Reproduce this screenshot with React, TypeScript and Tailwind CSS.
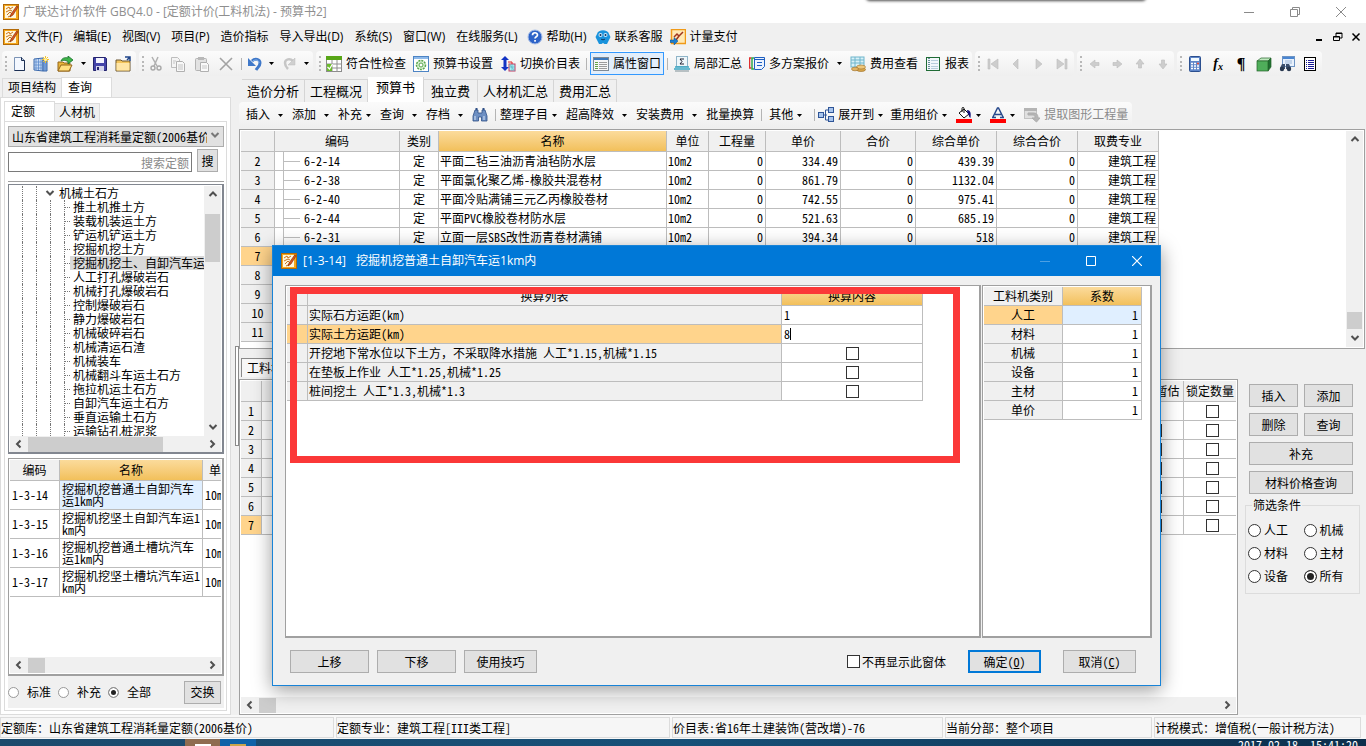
import React, { useState, type ReactNode } from "react";

const UI = "font-['Open_Sans','Noto_Sans_CJK_SC',sans-serif]";
const SONG = "font-['Noto_Sans_Mono_CJK_SC','Noto_Sans_CJK_SC',monospace]";

type IconProps = { children: ReactNode; w?: number; h?: number };

const Svg = ({ children, w = 16, h = 16 }: IconProps) => (
  <svg width={w} height={h} viewBox={`0 0 ${w} ${h}`} className="shrink-0" aria-hidden="true">
    {children}
  </svg>
);

const LogoIcon = () => (
  <Svg>
    <rect x="0.5" y="0.5" width="15" height="15" fill="#f5a81c" stroke="#b36a08" />
    <rect x="2" y="2" width="11" height="12" fill="#fff6dc" />
    <path d="M3 5l3-2 1 2 3-2M3 8l4-2 2 1M4 11l3-3 3 3M5 13l4-2" stroke="#c9731a" fill="none" />
    <path d="M14 1.5L8 10l-1 3 3-2 5-8z" fill="#d9541e" stroke="#7d2d08" strokeWidth="0.6" />
  </Svg>
);

const NewIcon = () => (
  <Svg>
    <path d="M3.5 1.5h7l3 3v10h-10z" fill="#f4f8ff" stroke="#7b93b5" />
    <path d="M10.5 1.5l3 3v10h-10" fill="none" stroke="#1c2f52" />
    <path d="M10.5 1.5v3h3" fill="#c5d4ea" stroke="#1c2f52" />
  </Svg>
);

const BuildingIcon = () => (
  <Svg>
    <path d="M1 3l9-1v13l-9-1z" fill="#c9dcf5" stroke="#3a68ab" />
    <path d="M10 4h4v11h-4z" fill="#7ea6dc" stroke="#3a68ab" />
    <path d="M3 3v11M5.5 3v11M8 2.500v12M1 6h9M1 9h9M1 12h9M12 5v9" stroke="#5c8ccd" strokeWidth="0.8" />
    <path d="M12.500 0v7M9 3.500h7M10 1l5 5M15 1l-5 5" stroke="#f7c325" />
    <circle cx="12.500" cy="3.500" r="1.500" fill="#fff2a0" />
  </Svg>
);

const OpenIcon = () => (
  <Svg>
    <path d="M1 6h5l1 1h6v8H1z" fill="#e8b53a" stroke="#94661a" />
    <path d="M1 15l3-6h11l-3 6z" fill="#ffdf7e" stroke="#94661a" />
    <path d="M4 5c1-3 4-4 7-3V0l5 4-5 4V5.500C8 4 6 4 4 5z" fill="#3fb54a" stroke="#14702a" strokeWidth="0.8" />
  </Svg>
);

const SaveIcon = () => (
  <Svg>
    <path d="M1.500 1.500h12l1 1v12h-13z" fill="#4343a8" stroke="#24246e" />
    <rect x="4" y="2" width="8" height="5" fill="#f4f4ff" />
    <rect x="4" y="10" width="8" height="5" fill="#d5d5ea" />
    <rect x="5" y="11" width="2" height="3" fill="#24246e" />
  </Svg>
);

const FolderIcon = () => (
  <Svg>
    <path d="M1 4h5l1 1h8v10H1z" fill="#f3c45b" stroke="#6b5632" />
    <path d="M1.500 7h13v7.500h-13z" fill="#ffe6a6" />
    <path d="M10 1h5v4M15 1l-3 3" stroke="#22478b" strokeWidth="1.500" fill="none" />
  </Svg>
);

const CutIcon = () => (
  <Svg>
    <path d="M4 1l5 9M10 1L6 10" stroke="#b0b0b0" strokeWidth="1.500" />
    <circle cx="5" cy="12" r="2" fill="none" stroke="#a8a8a8" strokeWidth="1.400" />
    <circle cx="11" cy="12" r="2" fill="none" stroke="#a8a8a8" strokeWidth="1.400" />
  </Svg>
);

const CopyIcon = () => (
  <Svg>
    <path d="M1.500 1.500h6l2 2v8h-8z" fill="#f4f4f4" stroke="#bdbdbd" />
    <path d="M6.500 5.500h6l2 2v8h-8z" fill="#f8f8f8" stroke="#b0b0b0" />
    <path d="M8 9h5M8 11h5M8 13h5M3 5h3M3 7h2" stroke="#c4c4c4" />
  </Svg>
);

const PasteIcon = () => (
  <Svg>
    <rect x="1.500" y="2.500" width="11" height="12" rx="1" fill="#e2e2e2" stroke="#b4b4b4" />
    <rect x="4" y="1" width="6" height="3" fill="#b8b8b8" />
    <path d="M6.500 6.500h6l2 2v7h-8z" fill="#fafafa" stroke="#b0b0b0" />
    <path d="M8 10h5M8 12h5" stroke="#c8c8c8" />
  </Svg>
);

const DeleteIcon = () => (
  <Svg>
    <path d="M2 2l12 12M14 2L2 14" stroke="#a2a2a2" strokeWidth="1.600" />
  </Svg>
);

const UndoIcon = () => (
  <Svg>
    <path d="M5 5c3-3 8-2 8 2 0 3-2 4-4 7" stroke="#3f78c9" strokeWidth="3" fill="none" />
    <path d="M1 2v8h8z" fill="#3f78c9" />
    <path d="M6 5c3-2 6-1 6 2" stroke="#8fb8ee" fill="none" />
  </Svg>
);

const RedoIcon = () => (
  <Svg>
    <path d="M12 5C9 2 4 3 4 7c0 3 1 4 3 6" stroke="#c6c6c6" strokeWidth="2.500" fill="none" />
    <path d="M14 2v7H7z" fill="#d0d0d0" stroke="#bcbcbc" strokeWidth="0.500" />
  </Svg>
);

const CheckTableIcon = () => (
  <Svg>
    <rect x="0.500" y="0.500" width="15" height="15" fill="#fff" stroke="#8c8c8c" />
    <rect x="0" y="0" width="16" height="4" fill="#58a618" />
    <path d="M0 8h16M0 12h16M6 4v12M11 4v12" stroke="#8f8f8f" />
    <rect x="1" y="8" width="5" height="7" fill="#6cbd2c" />
    <path d="M1.500 11l2 2 3-5" stroke="#fff" fill="none" strokeWidth="1.200" />
  </Svg>
);

const GearIcon = () => (
  <Svg>
    <rect x="0.500" y="0.500" width="15" height="15" fill="#fff" stroke="#4d84c4" />
    <rect x="1" y="1" width="14" height="2" fill="#8db9ea" />
    <circle cx="8" cy="9" r="4.500" fill="#d9f0d2" stroke="#58a64d" strokeDasharray="2 1" strokeWidth="1.500" />
    <circle cx="8" cy="9" r="2" fill="#fff" stroke="#58a64d" />
  </Svg>
);

const SwitchIcon = () => (
  <Svg>
    <path d="M5 0l4 4H6.500v7H9l-4 4-4-4h2.500V4H1z" fill="#1233c4" />
    <rect x="9" y="8" width="6" height="7" fill="#a8eef2" stroke="#c23a62" />
    <path d="M9 11h6M12 8v7M9 8l6 7" stroke="#5ab6c8" strokeWidth="0.700" />
    <path d="M8 6h4v2" stroke="#e02424" fill="none" />
  </Svg>
);

const PropsIcon = () => (
  <Svg>
    <rect x="0.500" y="1.500" width="15" height="13" fill="#f7f7f7" stroke="#7e8a96" />
    <rect x="1" y="2" width="14" height="2" fill="#3b78bd" />
    <path d="M2 6.500h3M2 8.500h3M2 10.500h3M2 12.500h3" stroke="#64a443" />
    <path d="M6 6.500h8M6 8.500h8M6 10.500h8M6 12.500h8" stroke="#9c9c9c" />
  </Svg>
);

const SumIcon = () => (
  <Svg>
    <rect x="2.500" y="0.500" width="11" height="10" fill="#eef7fb" stroke="#8fb4c8" />
    <path d="M10 3H6l2 2.500L6 8h4" stroke="#223" fill="none" />
    <path d="M0 13h16M1 11h14" stroke="#3aa6c4" strokeWidth="1.500" />
    <path d="M1 15h14" stroke="#7f8f96" />
  </Svg>
);

const PlansIcon = () => (
  <Svg>
    <path d="M2.500 2h-2v10h2" stroke="#e03030" fill="none" strokeWidth="1.500" />
    <path d="M5 2H3v11h2" stroke="#2fa84b" fill="none" strokeWidth="1.500" />
    <path d="M5.500 1.500h10v9l-3 3h-7z" fill="#eaf2ff" stroke="#1e5fc0" />
    <path d="M5.500 3.500h10M8 6.500h5M8 9.500h5" stroke="#1e5fc0" />
  </Svg>
);

const CoinsIcon = () => (
  <Svg>
    <rect x="1" y="1" width="13" height="10" fill="#d8f1f8" stroke="#6fb5cc" />
    <path d="M1 4h13M1 7h13M5 1v10M10 1v10" stroke="#6fb5cc" />
    <ellipse cx="11" cy="13.500" rx="4.500" ry="2" fill="#d8a64c" stroke="#9a6c24" strokeWidth="0.600" />
    <ellipse cx="11" cy="11" rx="4.500" ry="2" fill="#edc77c" stroke="#9a6c24" strokeWidth="0.600" />
    <ellipse cx="5" cy="13" rx="3.500" ry="1.800" fill="#e2b465" stroke="#9a6c24" strokeWidth="0.600" />
  </Svg>
);

const ReportIcon = () => (
  <Svg>
    <rect x="1.500" y="1.500" width="13" height="13" fill="#f2f7fb" stroke="#1f6b35" />
    <path d="M4 2v12" stroke="#6a8f9c" strokeWidth="2" strokeDasharray="1 1" />
    <path d="M6 4.500h7M6 7.500h7M6 10.500h7M6 12.500h7" stroke="#b7cddb" />
  </Svg>
);

const NavIcon = ({ d }: { d: string }) => (
  <Svg w={12} h={12}>
    <path d={d} fill="#cdcdcd" stroke="#bcbcbc" strokeWidth="0.600" />
  </Svg>
);

const CalcIcon = () => (
  <Svg>
    <rect x="2.500" y="0.500" width="11" height="15" rx="1" fill="#5f86c8" stroke="#2b4f8f" />
    <rect x="4" y="2" width="8" height="3" fill="#f2fbff" />
    <path d="M4 7.500h8M4 10h8M4 12.500h8" stroke="#fff" strokeWidth="1.500" strokeDasharray="2 1" />
    <path d="M10 7.500h2" stroke="#e84c3c" strokeWidth="1.500" />
  </Svg>
);

const CubeIcon = () => (
  <Svg>
    <path d="M1 5l4-3h10l-3 3z" fill="#bfe8bf" stroke="#24632a" strokeWidth="0.700" />
    <path d="M12 5l3-3v9l-3 4z" fill="#1f7030" stroke="#24632a" strokeWidth="0.700" />
    <rect x="1" y="5" width="11" height="10" fill="#4fae5a" stroke="#24632a" strokeWidth="0.700" />
  </Svg>
);

const FindWinIcon = () => (
  <Svg>
    <rect x="3.500" y="0.500" width="12" height="10" fill="#e8f1fc" stroke="#6d94c4" />
    <rect x="4" y="1" width="11" height="2" fill="#4a86d2" />
    <path d="M6 5h7M6 7h7" stroke="#9db7d8" />
    <path d="M1 12l2-4h3v5H1zM7 13V8h3l2 4v1z" fill="#3b4f6d" />
    <circle cx="3" cy="13" r="2.200" fill="#28384f" />
    <circle cx="10" cy="13" r="2.200" fill="#28384f" />
  </Svg>
);

const ListIcon = () => (
  <Svg>
    <rect x="2.500" y="1.500" width="11" height="13" fill="#fff" stroke="#000" />
    <path d="M4 4.500h1M4 6.500h1M4 8.500h1M4 10.500h1M4 12.500h1M6 4.500h6M6 6.500h6M6 8.500h6M6 10.500h6M6 12.500h6" stroke="#1a1a96" />
  </Svg>
);

const HelpIcon = () => (
  <Svg>
    <circle cx="8" cy="8" r="7" fill="#2d63c8" stroke="#a9bfe8" />
    <path d="M5.500 6.200C5.500 3 10.500 3 10.500 6c0 1.800-2.500 1.800-2.500 3.600" stroke="#fff" strokeWidth="1.700" fill="none" />
    <rect x="7.200" y="11" width="1.700" height="1.700" fill="#fff" />
  </Svg>
);

const ServiceIcon = () => (
  <Svg>
    <path d="M2 5C3 0 13 0 14 5l1.500 3-1.500 3-2 4H9.500L8 14l-1.500 1H4l-2-4L.5 8z" fill="#1a93dc" />
    <circle cx="5.500" cy="6" r="2" fill="#cdeaff" />
    <circle cx="10.500" cy="6" r="2" fill="#cdeaff" />
    <circle cx="5.500" cy="6" r="1" fill="#10345c" />
    <circle cx="10.500" cy="6" r="1" fill="#10345c" />
    <path d="M6 10c1 1 3 1 4 0" stroke="#10345c" fill="none" />
  </Svg>
);

const PayIcon = () => (
  <Svg>
    <rect x="1.500" y="0.500" width="14" height="14" fill="#ffe9b5" stroke="#f09a18" strokeWidth="1.500" />
    <path d="M4 8l3-3 2 2-3 4M8 8l5-5" stroke="#a03520" strokeWidth="1.500" fill="none" />
    <path d="M0 11h4V8.500L8 12l-4 4v-2.500H0z" fill="#1b7fd0" stroke="#0b4b88" strokeWidth="0.500" />
  </Svg>
);

const BinocIcon = () => (
  <Svg>
    <path d="M1 9l2-6h3v3h4V3h3l2 6v5H9.500v-4h-3v4H1z" fill="#6d8fc2" stroke="#2f4f86" strokeWidth="0.800" />
    <path d="M3.500 1h2v2h-2zM10.500 1h2v2h-2z" fill="#2f4f86" />
    <path d="M3 9v4M12 9v4" stroke="#d8e5f8" />
  </Svg>
);

const ExpandIcon = () => (
  <Svg>
    <path d="M5 8h4M7.500 8V3h3M7.500 8v5h3" stroke="#2f5597" fill="none" />
    <rect x="0.500" y="5.500" width="5" height="5" fill="#a8c4ec" stroke="#2f5597" />
    <rect x="10.500" y="0.500" width="5" height="5" fill="#a8c4ec" stroke="#2f5597" />
    <rect x="10.500" y="9.500" width="5" height="5" fill="#a8c4ec" stroke="#2f5597" />
  </Svg>
);

const FillIcon = () => (
  <Svg>
    <path d="M3 6l5-4 5 5-5 4z" fill="#fff" stroke="#111" />
    <path d="M6 5V1.500c0-1.500 2-1.500 2 0V6" stroke="#111" fill="none" />
    <path d="M11 3c4 0 4 4 3.500 8-2-1-1.500-4-3-5z" fill="#12127a" />
    <rect x="0" y="12" width="16" height="4" fill="#f00" />
  </Svg>
);

const FontColorIcon = () => (
  <Svg>
    <path d="M3 10L7.500 1h1L13 10M5 7.500h6M2 10.500h4M10 10.500h4" stroke="#28498c" strokeWidth="1.500" fill="none" />
    <rect x="0" y="12" width="16" height="4" fill="#f00" />
  </Svg>
);

const ExtractIcon = () => (
  <Svg>
    <rect x="0.500" y="1.500" width="12" height="10" fill="#e0e0e0" stroke="#c2c2c2" />
    <rect x="0" y="1" width="13" height="3" fill="#b4b4b4" />
    <path d="M4 8h5c2 0 2 1 2 3H8l4.500 4 3.500-4h-2c0-4-2-5-5-5H4z" fill="#b5b5b5" stroke="#adadad" />
  </Svg>
);

const Chevron = ({ dir, color = "#505050" }: { dir: "up" | "down" | "left" | "right"; color?: string }) => {
  const paths = {
    up: "M1.500 6L5 2.500 8.500 6",
    down: "M1.500 3L5 6.500 8.500 3",
    left: "M6.500 1.500L3 5l3.500 3.500",
    right: "M3.500 1.500L7 5 3.500 8.500",
  };
  return (
    <Svg w={10} h={10}>
      <path d={paths[dir]} stroke={color} strokeWidth="2" fill="none" />
    </Svg>
  );
};

const Caret = ({ color = "#000" }: { color?: string }) => (
  <Svg w={5} h={3}>
    <path d="M0 0h5L2.500 3z" fill={color} />
  </Svg>
);

const Drop = ({ label }: { label: string }) => (
  <button type="button" aria-label={label} className="flex h-5 w-[13px] shrink-0 items-center justify-center">
    <Caret />
  </button>
);

const Sep = () => <span className="mx-[3px] h-3 w-px shrink-0 bg-[#b4b4b4]" />;

const Grip = () => <span className="mx-[2px] h-[15px] w-0 shrink-0 border-l-2 border-dotted border-[#b8b8b8]" />;

const Segment = ({ children }: { children: ReactNode }) => (
  <div className="flex h-[25px] shrink-0 items-center rounded-sm bg-linear-to-b from-[#fbfbfb] to-[#efefef] pl-px">
    {children}
  </div>
);

const IconButton = ({ label, children, className = "w-6" }: { label: string; children: ReactNode; className?: string }) => (
  <button type="button" aria-label={label} className={`flex h-5 shrink-0 items-center justify-center ${className}`}>
    {children}
  </button>
);

const ToolButton = ({ icon, label, active = false }: { icon: ReactNode; label: string; active?: boolean }) => (
  <button
    type="button"
    className={`flex h-[23px] shrink-0 items-center gap-1 border px-[2px] whitespace-nowrap ${
      active ? "border-[#3399ff] bg-[#e2eefb]" : "border-transparent"
    }`}
  >
    {icon}
    {label}
  </button>
);

const MenuDrop = ({ label, tight = false }: { label: string; tight?: boolean }) => (
  <button type="button" className={`flex h-5 shrink-0 items-center pr-[9px] whitespace-nowrap ${tight ? "gap-1" : "gap-2"}`}>
    {label}
    <Caret />
  </button>
);

const Button = ({ children, className = "" }: { children: ReactNode; className?: string }) => (
  <button type="button" className={`h-[23px] shrink-0 border border-[#adadad] bg-[#e1e1e1] leading-none whitespace-nowrap ${className}`}>
    {children}
  </button>
);

const HScroll = ({ thumb }: { thumb: string }) => (
  <div className="flex h-4 shrink-0 items-center bg-[#f0f0f0]">
    <span className="flex w-[18px] justify-center">
      <Chevron dir="left" />
    </span>
    <span className={`h-[15px] bg-[#cdcdcd] ${thumb}`} />
    <span className="ml-auto flex w-[18px] justify-center">
      <Chevron dir="right" />
    </span>
  </div>
);

const Radio = ({ name, label, dark = false, checked = false, gap }: { name: string; label: string; dark?: boolean; checked?: boolean; gap: string }) => (
  <label className={`flex items-center ${gap}`}>
    <input
      type="radio"
      name={name}
      defaultChecked={checked}
      className={`appearance-none rounded-full border bg-white checked:bg-[#222] checked:shadow-[inset_0_0_0_2px_white] ${
        dark ? "size-[13px] border-[#333]" : "size-[11px] border-[#999]"
      }`}
    />
    {label}
  </label>
);

const Check = ({ label }: { label: string }) => (
  <input type="checkbox" aria-label={label} className="block size-[13px] appearance-none border border-[#333] bg-white checked:bg-[#333]" />
);

const menus = ["文件(F)", "编辑(E)", "视图(V)", "项目(P)", "造价指标", "导入导出(D)", "系统(S)", "窗口(W)", "在线服务(L)"];

const treeItems = [
  "推土机推土方",
  "装载机装运土方",
  "铲运机铲运土方",
  "挖掘机挖土方",
  "挖掘机挖土、自卸汽车运",
  "人工打孔爆破岩石",
  "机械打孔爆破岩石",
  "控制爆破岩石",
  "静力爆破岩石",
  "机械破碎岩石",
  "机械清运石渣",
  "机械装车",
  "机械翻斗车运土石方",
  "拖拉机运土石方",
  "自卸汽车运土石方",
  "垂直运输土石方",
  "运输钻孔桩泥浆",
];

const quotas = [
  ["1-3-14", "挖掘机挖普通土自卸汽车运1km内"],
  ["1-3-15", "挖掘机挖坚土自卸汽车运1km内"],
  ["1-3-16", "挖掘机挖普通土槽坑汽车运1km内"],
  ["1-3-17", "挖掘机挖坚土槽坑汽车运1km内"],
];

const budgetRows = [
  { no: 2, code: "6-2-14", name: "平面二毡三油沥青油毡防水层", price: "334.49", total: "439.39" },
  { no: 3, code: "6-2-38", name: "平面氯化聚乙烯-橡胶共混卷材", price: "861.79", total: "1132.04" },
  { no: 4, code: "6-2-40", name: "平面冷贴满铺三元乙丙橡胶卷材", price: "742.55", total: "975.41" },
  { no: 5, code: "6-2-44", name: "平面PVC橡胶卷材防水层", price: "521.63", total: "685.19" },
  { no: 6, code: "6-2-31", name: "立面一层SBS改性沥青卷材满铺", price: "394.34", total: "518" },
];

const budgetCols = [34, 125, 39, 228, 42, 57, 75, 75, 81, 81, 81];
const budgetHeads = ["", "编码", "类别", "名称", "单位", "工程量", "单价", "合价", "综合单价", "综合合价", "取费专业"];

const cell = "h-[19px] border-r border-b border-[#bdbdbd] p-0 leading-[18px] whitespace-nowrap";
const gold = "bg-linear-to-b from-[#fbdb9b] to-[#f2c05a]";

const TitleBar = () => (
  <header className="flex h-[23px] shrink-0 items-center bg-white pl-[3px] text-[#8f8f8f]">
    <LogoIcon />
    <h1 className="ml-1 text-xs whitespace-nowrap">广联达计价软件 GBQ4.0 - [定额计价(工料机法) - 预算书2]</h1>
    <div className="ml-auto flex items-center pr-[2px]">
      <IconButton label="最小化" className="w-[46px]">
        <Svg w={10} h={10}><path d="M0 5.500h10" stroke="#8a8a8a" /></Svg>
      </IconButton>
      <IconButton label="还原" className="w-[46px]">
        <Svg w={10} h={10}><path d="M.5 2.500h7v7h-7zM2.500 2.500v-2h7v7h-2" fill="none" stroke="#8a8a8a" /></Svg>
      </IconButton>
      <IconButton label="关闭" className="w-[46px]">
        <Svg w={10} h={10}><path d="M0 0l10 10M10 0L0 10" stroke="#8a8a8a" /></Svg>
      </IconButton>
    </div>
  </header>
);

const MenuBar = () => (
  <nav className="flex h-7 shrink-0 items-center pl-[3px] whitespace-nowrap">
    <LogoIcon />
    <div className="ml-[6px] flex gap-[11px]">
      {menus.map((m) => (
        <button key={m} type="button">{m}</button>
      ))}
    </div>
    <button type="button" className="ml-[9px] flex items-center gap-1"><HelpIcon />帮助(H)</button>
    <button type="button" className="ml-2 flex items-center gap-1"><ServiceIcon />联系客服</button>
    <button type="button" className="ml-[7px] flex items-center gap-1"><PayIcon />计量支付</button>
    <div className="ml-auto flex pr-px">
      <IconButton label="最小化子窗口" className="w-[18px]">
        <Svg w={10} h={10}><path d="M1 8h6" stroke="#000" strokeWidth="2" /></Svg>
      </IconButton>
      <IconButton label="还原子窗口" className="w-[18px]">
        <Svg w={10} h={10}><path d="M.5 4.500h6v4h-6zM3 4V1h6v5H7M3 1.500h6M.5 5h6" fill="none" stroke="#000" /></Svg>
      </IconButton>
      <IconButton label="关闭子窗口" className="w-[18px]">
        <Svg w={10} h={10}><path d="M1.500 1.500l7 7M8.500 1.500l-7 7" stroke="#000" strokeWidth="1.500" /></Svg>
      </IconButton>
    </div>
  </nav>
);

const MainToolbar = () => (
  <div className="flex h-[26px] shrink-0 items-start gap-[3px] pl-[2px]">
    <Segment>
      <Grip />
      <IconButton label="新建" className="w-5"><NewIcon /></IconButton>
      <IconButton label="新建项目"><BuildingIcon /></IconButton>
      <IconButton label="打开"><OpenIcon /></IconButton>
      <Drop label="最近文件" />
      <IconButton label="保存" className="w-5"><SaveIcon /></IconButton>
      <IconButton label="目录" className="w-[26px]"><FolderIcon /></IconButton>
    </Segment>
    <Segment>
      <Grip />
      <IconButton label="剪切" className="w-5"><CutIcon /></IconButton>
      <IconButton label="复制"><CopyIcon /></IconButton>
      <IconButton label="粘贴"><PasteIcon /></IconButton>
      <IconButton label="删除"><DeleteIcon /></IconButton>
      <Sep />
      <IconButton label="撤销" className="w-5"><UndoIcon /></IconButton>
      <Drop label="撤销列表" />
      <IconButton label="恢复" className="w-[22px]"><RedoIcon /></IconButton>
      <Drop label="恢复列表" />
    </Segment>
    <Segment>
      <Grip />
      <div className="flex items-center gap-px">
        <ToolButton icon={<CheckTableIcon />} label="符合性检查" />
        <ToolButton icon={<GearIcon />} label="预算书设置" />
        <ToolButton icon={<SwitchIcon />} label="切换价目表" />
      </div>
      <Sep />
      <ToolButton icon={<PropsIcon />} label="属性窗口" active />
      <Sep />
      <div className="flex items-center gap-px">
        <ToolButton icon={<SumIcon />} label="局部汇总" />
        <ToolButton icon={<PlansIcon />} label="多方案报价" />
        <Drop label="方案列表" />
        <ToolButton icon={<CoinsIcon />} label="费用查看" />
        <ToolButton icon={<ReportIcon />} label="报表" />
      </div>
    </Segment>
    <Segment>
      <Grip />
      <IconButton label="首条" className="w-[22px]"><NavIcon d="M1 1h2v10H1zM11 1v10L4 6z" /></IconButton>
      <IconButton label="上一条"><NavIcon d="M8 1v10L3 6z" /></IconButton>
      <IconButton label="下一条" className="w-[22px]"><NavIcon d="M3 1v10l6-5z" /></IconButton>
      <IconButton label="末条"><NavIcon d="M9 1h2v10H9zM1 1v10l7-5z" /></IconButton>
    </Segment>
    <Segment>
      <Grip />
      <IconButton label="左移" className="w-[22px]"><NavIcon d="M1 6l5-4v2.500h4v3H6V10z" /></IconButton>
      <IconButton label="右移" className="w-[22px]"><NavIcon d="M11 6L6 2v2.500H2v3h4V10z" /></IconButton>
      <IconButton label="上移"><NavIcon d="M6 1l4 5H7.500v4h-3V6H2z" /></IconButton>
      <IconButton label="下移" className="w-[22px]"><NavIcon d="M6 11l4-5H7.500V2h-3v4H2z" /></IconButton>
    </Segment>
    <Segment>
      <Grip />
      <IconButton label="计算器" className="w-[22px]"><CalcIcon /></IconButton>
      <IconButton label="函数" className="w-6">
        <span className="font-['Liberation_Serif',serif] text-sm leading-none font-bold italic">f<sub className="text-[10px]">x</sub></span>
      </IconButton>
      <IconButton label="段落" className="w-[22px]">
        <span className="font-['Liberation_Serif',serif] text-base leading-none font-bold">¶</span>
      </IconButton>
      <IconButton label="图形"><CubeIcon /></IconButton>
      <IconButton label="查找窗口" className="w-[22px]"><FindWinIcon /></IconButton>
      <IconButton label="清单"><ListIcon /></IconButton>
    </Segment>
  </div>
);

const QueryPanel = () => {
  const [current, setCurrent] = useState("挖掘机挖土、自卸汽车运");

  return (
    <aside className="flex w-[231px] shrink-0 flex-col">
      <div className="flex h-5 items-end pl-[2px]">
        <button type="button" className="h-[19px] border border-r-0 border-b-0 border-[#dcdcdc] px-[5px]">项目结构</button>
        <button type="button" className="h-5 w-[51px] border border-b-0 border-[#dcdcdc] bg-white pl-[6px] text-left">查询</button>
      </div>
      <div className="flex min-h-0 flex-1 flex-col border border-[#dcdcdc] bg-white p-[3px]">
        <div className="flex h-5 shrink-0 items-end">
          <button type="button" className="h-5 w-[51px] border border-b-0 border-[#dcdcdc] pl-[6px] text-left">定额</button>
          <button type="button" className="h-[18px] border border-b-0 border-l-0 border-[#dcdcdc] bg-[#f0f0f0] px-1">人材机</button>
        </div>
        <div className={`flex min-h-0 flex-1 flex-col border border-[#dcdcdc] pt-1 pr-[2px] pb-[2px] pl-[3px] ${SONG}`}>
          <div className="relative shrink-0">
            <select aria-label="定额库" className="block h-[21px] w-full appearance-none border border-[#adadad] bg-[#e1e1e1] pr-4 pl-[3px] text-xs leading-none">
              <option>山东省建筑工程消耗量定额(2006基价)</option>
            </select>
            <span className="pointer-events-none absolute top-1 right-1"><Chevron dir="down" color="#777" /></span>
          </div>
          <div className="mt-[2px] flex shrink-0 items-end gap-[5px] border-b border-[#a0a0a0] pb-[9px]">
            <input aria-label="搜索定额" placeholder="搜索定额" className="h-5 w-[184px] border border-[#7a7a7a] px-[2px] text-right placeholder:text-[#8a8a8a]" />
            <Button className="w-[21px]">搜</Button>
          </div>

          <div className="mt-[2px] flex h-[270px] shrink-0 flex-col border border-r-2 border-b-2 border-[#828790] px-px pt-px">
            <div className="flex min-h-0 flex-1">
              <ul className="min-w-0 flex-1 overflow-hidden">
                <li>
                  <div className="flex h-[14px] items-center pl-3">
                    <span className="h-full w-[14px] border-l border-dotted border-[#777]" />
                    <span className="h-full w-[9px] border-l border-dotted border-[#777]" />
                    <span className="mr-1"><Chevron dir="down" /></span>
                    <span className="leading-[14px]">机械土石方</span>
                  </div>
                  <ul>
                    {treeItems.map((item) => (
                      <li key={item} className="flex h-[14px] items-center pl-3">
                        <span className="h-full w-[14px] shrink-0 border-l border-dotted border-[#777]" />
                        <span className="h-full w-[14px] shrink-0 border-l border-dotted border-[#777]" />
                        <span className="h-full w-[14px] shrink-0 border-l border-dotted border-[#777]" />
                        <span className="flex h-full w-[6px] shrink-0 items-center border-l border-dotted border-[#777]">
                          <span className="w-full border-t border-dotted border-[#777]" />
                        </span>
                        <button
                          type="button"
                          onClick={() => setCurrent(item)}
                          className={`h-[14px] pr-1 pl-[3px] leading-[14px] whitespace-nowrap ${item === current ? "bg-[#d9d9d9]" : ""}`}
                        >
                          {item}
                        </button>
                      </li>
                    ))}
                  </ul>
                </li>
              </ul>
              <div className="flex w-[17px] shrink-0 flex-col items-center bg-[#f0f0f0]">
                <span className="flex h-7 items-start pt-1"><Chevron dir="up" /></span>
                <span className="h-12 w-[15px] bg-[#cdcdcd]" />
                <span className="mt-auto pb-1"><Chevron dir="down" /></span>
              </div>
            </div>
            <HScroll thumb="w-[135px]" />
          </div>

          <div className="mt-1 flex min-h-0 flex-1 flex-col border border-r-2 border-b-2 border-[#a0a0a0] p-px">
            <div className="min-h-0 flex-1 overflow-hidden">
              <table className="w-[230px] table-fixed border-separate border-spacing-0">
                <colgroup>
                  <col className="w-[50px]" />
                  <col className="w-[143px]" />
                  <col />
                </colgroup>
                <thead>
                  <tr>
                    <th className={`${cell} h-[21px] bg-[#f0f0f0] font-normal`}>编码</th>
                    <th className={`${cell} h-[21px] font-normal ${gold}`}>名称</th>
                    <th className={`${cell} h-[21px] bg-[#f0f0f0] font-normal`}>单位</th>
                  </tr>
                </thead>
                <tbody>
                  {quotas.map(([code, name], i) => (
                    <tr key={code}>
                      <td className="h-[29px] border-r border-b border-[#bdbdbd] p-0 pl-[2px] leading-none">{code}</td>
                      <td className={`h-[29px] border-r border-b border-[#bdbdbd] p-0 pl-[2px] leading-3 break-all ${i === 0 ? "bg-[#e0efff]" : ""}`}>{name}</td>
                      <td className="h-[29px] border-b border-[#bdbdbd] p-0 pl-[2px] leading-none">10m3</td>
                    </tr>
                  ))}
                </tbody>
              </table>
            </div>
            <HScroll thumb="w-[17px]" />
          </div>

          <div className="flex h-8 shrink-0 items-center gap-[7px] bg-[#f0f0f0]">
            <Radio name="source" label="标准" gap="gap-2" />
            <Radio name="source" label="补充" gap="gap-2" />
            <Radio name="source" label="全部" gap="gap-2" checked />
            <Button className="mr-[3px] ml-auto w-[37px]">交换</Button>
          </div>
        </div>
      </div>
    </aside>
  );
};

const BudgetTabs = () => (
  <div className="flex h-[25px] shrink-0 items-end pl-[3px] text-[13px]">
    {["造价分析", "工程概况", "预算书", "独立费", "人材机汇总", "费用汇总"].map((t) => (
      <button
        key={t}
        type="button"
        className={`min-w-[54px] border-r border-[#d5d5d5] leading-none whitespace-nowrap ${t === "预算书" ? "h-[25px] bg-white px-2 pb-1" : "h-[23px] border-t px-[5px]"}`}
      >
        {t}
      </button>
    ))}
  </div>
);

const BudgetToolbar = () => (
  <div className="flex h-[26px] shrink-0 items-center self-start rounded-sm bg-linear-to-b from-[#fbfbfb] to-[#efefef] pr-1 pl-[7px]">
    <MenuDrop label="插入" />
    <MenuDrop label="添加" />
    <MenuDrop label="补充" tight />
    <MenuDrop label="查询" />
    <MenuDrop label="存档" />
    <BinocIcon />
    <span className="w-1" />
    <Sep />
    <span className="w-px" />
    <MenuDrop label="整理子目" tight />
    <MenuDrop label="超高降效" />
    <MenuDrop label="安装费用" />
    <button type="button" className="mr-1 whitespace-nowrap">批量换算</button>
    <Sep />
    <span className="w-1" />
    <MenuDrop label="其他" tight />
    <Sep />
    <button type="button" className="mr-[7px] flex items-center gap-1 whitespace-nowrap"><ExpandIcon />展开到<Caret /></button>
    <MenuDrop label="重用组价" tight />
    <FillIcon />
    <Drop label="填充颜色" />
    <span className="w-[5px]" />
    <FontColorIcon />
    <Drop label="字体颜色" />
    <span className="w-[5px]" />
    <button type="button" disabled className="flex items-center gap-1 whitespace-nowrap text-[#8a8a8a]"><ExtractIcon />提取图形工程量</button>
  </div>
);

const BudgetGrid = () => (
  <section className={`flex h-[220px] shrink-0 border border-[#a0a0a0] bg-white p-px ${SONG}`}>
    <div className="min-w-0 flex-1 overflow-hidden">
      <table className="w-[918px] table-fixed border-separate border-spacing-0">
        <colgroup>
          {budgetCols.map((w, i) => (
            <col key={i} style={{ width: w }} />
          ))}
        </colgroup>
        <thead>
          <tr>
            {budgetHeads.map((h) => (
              <th key={h} className={`${cell} h-[21px] font-normal ${h === "名称" ? gold : "bg-[#f0f0f0]"}`}>{h}</th>
            ))}
          </tr>
        </thead>
        <tbody>
          {budgetRows.map((r) => (
            <tr key={r.no}>
              <td className={`${cell} bg-[#f0f0f0] text-center`}>{r.no}</td>
              <td className={cell}>
                <div className="ml-2 flex h-[18px] items-center border-l border-[#bdbdbd]">
                  <span className="mr-1 h-px w-4 bg-[#bdbdbd]" />
                  {r.code}
                </div>
              </td>
              <td className={`${cell} text-center`}>定</td>
              <td className={`${cell} pl-px`}>{r.name}</td>
              <td className={`${cell} pl-px`}>10m2</td>
              <td className={`${cell} pr-[2px] text-right`}>0</td>
              <td className={`${cell} pr-[2px] text-right`}>{r.price}</td>
              <td className={`${cell} pr-[2px] text-right`}>0</td>
              <td className={`${cell} pr-[2px] text-right`}>{r.total}</td>
              <td className={`${cell} pr-[2px] text-right`}>0</td>
              <td className={`${cell} pr-[2px] text-right`}>建筑工程</td>
            </tr>
          ))}
          {[7, 8, 9, 10, 11].map((n) => (
            <tr key={n}>
              <td className={`${cell} text-center ${n === 7 ? "bg-[#ffd48c]" : "bg-[#f0f0f0]"}`}>{n}</td>
              {budgetCols.slice(1).map((_, i) => (
                <td key={i} className={cell} />
              ))}
            </tr>
          ))}
        </tbody>
      </table>
    </div>
    <div className="flex w-[17px] shrink-0 flex-col items-center bg-[#f0f0f0]">
      <span className="pt-1"><Chevron dir="up" /></span>
      <span className="mt-auto h-[17px] w-[15px] bg-[#cdcdcd]" />
      <span className="pt-1 pb-1"><Chevron dir="down" /></span>
    </div>
  </section>
);

const MaterialGrid = () => (
  <section className={`flex min-w-0 flex-1 flex-col border border-[#a0a0a0] bg-white p-px ${SONG}`}>
    <div className="min-h-0 flex-1 overflow-hidden">
      <table className="w-full table-fixed border-separate border-spacing-0">
        <colgroup>
          <col className="w-[21px]" />
          <col />
          <col className="w-[56px]" />
          <col className="w-[52px]" />
        </colgroup>
        <thead>
          <tr>
            {["", "名称", "是否暂估", "锁定数量"].map((h) => (
              <th key={h} className={`${cell} h-[21px] bg-[#f0f0f0] font-normal last:border-r-0`}>{h}</th>
            ))}
          </tr>
        </thead>
        <tbody>
          {[1, 2, 3, 4, 5, 6, 7].map((n) => (
            <tr key={n}>
              <td className={`${cell} text-center ${n === 7 ? "bg-[#ffd48c]" : "bg-[#f0f0f0]"}`}>{n}</td>
              <td className={cell} />
              <td className={cell}>
                {n > 1 && <div className="flex justify-center"><Check label={`是否暂估 ${n}`} /></div>}
              </td>
              <td className={`${cell} border-r-0`}>
                <div className="flex justify-center pl-1"><Check label={`锁定数量 ${n}`} /></div>
              </td>
            </tr>
          ))}
        </tbody>
      </table>
    </div>
    <HScroll thumb="w-[17px]" />
  </section>
);

const SidePanel = () => (
  <div className={`w-[127px] shrink-0 pt-[5px] pl-[11px] ${SONG}`}>
    <div className="flex w-[104px] flex-wrap gap-[6px]">
      <Button className="w-[49px]">插入</Button>
      <Button className="w-[49px]">添加</Button>
      <Button className="w-[49px]">删除</Button>
      <Button className="w-[49px]">查询</Button>
      <Button className="w-[104px]">补充</Button>
      <Button className="w-[104px]">材料价格查询</Button>
    </div>
    <fieldset className="mt-[3px] -ml-1 w-[115px] border border-[#dcdcdc] pt-2 pb-2 pl-[2px]">
      <legend className="ml-1 px-px leading-4">筛选条件</legend>
      <div className="grid grid-cols-2 gap-y-[5px] leading-[18px]">
        <Radio name="filter" label="人工" dark gap="gap-[3px]" />
        <Radio name="filter" label="机械" dark gap="gap-[3px]" />
        <Radio name="filter" label="材料" dark gap="gap-[3px]" />
        <Radio name="filter" label="主材" dark gap="gap-[3px]" />
        <Radio name="filter" label="设备" dark gap="gap-[3px]" />
        <Radio name="filter" label="所有" dark gap="gap-[3px]" checked />
      </div>
    </fieldset>
  </div>
);

const convertRows = [
  "开挖地下常水位以下土方，不采取降水措施 人工*1.15,机械*1.15",
  "在垫板上作业 人工*1.25,机械*1.25",
  "桩间挖土 人工*1.3,机械*1.3",
];

const ConvertDialog = () => {
  const [stone, setStone] = useState("1");
  const [soil, setSoil] = useState("8");

  return (
    <div role="dialog" aria-label="换算" className={`absolute top-[245px] left-[272px] flex h-[441px] w-[889px] flex-col border border-[#1883d7] bg-[#f0f0f0] shadow-[0_4px_18px_rgba(0,0,0,0.4)] ${SONG}`}>
      <div className={`flex h-[30px] shrink-0 items-center bg-[#0078d7] pl-2 text-white ${UI}`}>
        <LogoIcon />
        <h2 className="ml-[6px] flex gap-[10px] text-xs">
          <span>[1-3-14]</span>
          <span>挖掘机挖普通土自卸汽车运1km内</span>
        </h2>
        <div className="ml-auto flex">
          <IconButton label="最小化对话框" className="w-[46px]">
            <Svg w={10} h={10}><path d="M0 5.500h10" stroke="#4da0e3" /></Svg>
          </IconButton>
          <IconButton label="最大化对话框" className="w-[46px]">
            <Svg w={10} h={10}><path d="M.5 .5h9v9h-9z" fill="none" stroke="#fff" /></Svg>
          </IconButton>
          <IconButton label="关闭对话框" className="w-[46px]">
            <Svg w={10} h={10}><path d="M0 0l10 10M10 0L0 10" stroke="#fff" strokeWidth="1.200" /></Svg>
          </IconButton>
        </div>
      </div>

      <div className="flex min-h-0 flex-1 gap-px pt-[9px] pr-2 pl-3">
        <div className="relative w-[696px] shrink-0 border border-r-2 border-b-2 border-[#a0a0a0] bg-white p-px">
          <table className="w-[636px] table-fixed border-separate border-spacing-0">
            <colgroup>
              <col className="w-[21px]" />
              <col className="w-[474px]" />
              <col className="w-[141px]" />
            </colgroup>
            <thead>
              <tr>
                <th className={`${cell} bg-[#f0f0f0]`} />
                <th className={`${cell} bg-[#f0f0f0] font-normal`}>换算列表</th>
                <th className={`${cell} font-normal ${gold}`}>换算内容</th>
              </tr>
            </thead>
            <tbody>
              <tr>
                <td className={`${cell} bg-[#f0f0f0]`} />
                <td className={`${cell} bg-[#f0f0f0] pl-px`}>实际石方运距(km)</td>
                <td className={cell}>
                  <input aria-label="实际石方运距(km)" value={stone} onChange={(e) => setStone(e.target.value)} className="block h-[18px] w-full pl-[2px] leading-[18px] outline-none" />
                </td>
              </tr>
              <tr>
                <td className={`${cell} bg-[#ffd48c]`} />
                <td className={`${cell} bg-[#ffd48c] pl-px`}>实际土方运距(km)</td>
                <td className={cell}>
                  <div className="flex items-center">
                    <input aria-label="实际土方运距(km)" value={soil} onChange={(e) => setSoil(e.target.value)} className="block h-[18px] w-2 pl-[2px] leading-[18px] outline-none" />
                    <span className="h-3 w-px bg-black" />
                  </div>
                </td>
              </tr>
              {convertRows.map((name) => (
                <tr key={name}>
                  <td className={`${cell} bg-[#f0f0f0]`} />
                  <td className={`${cell} bg-[#f0f0f0] pl-px`}>{name}</td>
                  <td className={cell}>
                    <div className="flex justify-center"><Check label={name} /></div>
                  </td>
                </tr>
              ))}
            </tbody>
          </table>
          <div className="pointer-events-none absolute top-px left-1 h-[176px] w-[670px] border-[7px] border-[#fb3838]" />
        </div>

        <div className="min-w-0 flex-1 border border-r-2 border-b-2 border-[#a0a0a0] bg-white p-px">
          <table className="w-[158px] table-fixed border-separate border-spacing-0">
            <thead>
              <tr>
                <th className={`${cell} bg-[#f0f0f0] font-normal`}>工料机类别</th>
                <th className={`${cell} font-normal ${gold}`}>系数</th>
              </tr>
            </thead>
            <tbody>
              {["人工", "材料", "机械", "设备", "主材", "单价"].map((k, i) => (
                <tr key={k}>
                  <td className={`${cell} text-center ${i === 0 ? "bg-[#ffd48c]" : "bg-[#f0f0f0]"}`}>{k}</td>
                  <td className={`${cell} pr-[3px] text-right ${i === 0 ? "bg-[#e0efff]" : ""}`}>1</td>
                </tr>
              ))}
            </tbody>
          </table>
        </div>
      </div>

      <div className="flex h-[47px] shrink-0 items-center pr-6 pl-[17px]">
        <div className="flex gap-2">
          <Button className="w-[79px]">上移</Button>
          <Button className="w-[79px]">下移</Button>
          <Button className="w-[73px]">使用技巧</Button>
        </div>
        <div className="ml-auto flex items-center gap-[22px]">
          <label className="flex items-center gap-[2px]">
            <input type="checkbox" className="size-[13px] appearance-none border border-[#333] bg-white checked:bg-[#333]" />
            不再显示此窗体
          </label>
          <button type="button" className="h-[23px] w-[73px] border-2 border-[#0078d7] bg-[#e1e1e1] leading-none">确定(<u>O</u>)</button>
          <Button className="w-[73px]">取消(<u>C</u>)</Button>
        </div>
      </div>
    </div>
  );
};

const StatusBar = () => (
  <footer className={`flex h-6 shrink-0 gap-[2px] bg-[#f8f8f8] pt-[2px] pr-[5px] pb-px whitespace-nowrap ${SONG}`}>
    <span className="w-[334px] border border-[#dcdcdc] bg-[#f6f6f6] leading-[20px]">定额库：山东省建筑工程消耗量定额(2006基价)</span>
    <span className="w-[334px] border border-[#dcdcdc] bg-[#f6f6f6] leading-[20px]">定额专业：建筑工程[III类工程]</span>
    <span className="w-[271px] border border-[#dcdcdc] bg-[#f6f6f6] leading-[20px]">价目表:省16年土建装饰(营改增)-76</span>
    <span className="w-[207px] border border-[#dcdcdc] bg-[#f6f6f6] leading-[20px]">当前分部：整个项目</span>
    <span className="flex-1 border border-[#dcdcdc] bg-[#f6f6f6] leading-[20px]">计税模式：增值税(一般计税方法)</span>
  </footer>
);

const Taskbar = () => (
  <div className="flex h-[7px] shrink-0 items-start overflow-hidden bg-linear-to-r from-[#1c4a6c] via-[#175078] to-[#0c2f4c]">
    <div className="ml-[185px] flex h-full w-[35px] justify-center bg-[#8f6c50] pt-[5px]"><span className="h-2 w-4 bg-white" /></div>
    <div className="flex h-full w-9 justify-center bg-[#0f62a8] pt-[5px]"><span className="h-2 w-4 bg-[#c9a54c]" /></div>
    <div className={`ml-auto flex gap-3 pr-2 text-xs leading-3 text-white ${SONG}`}>
      <span>2017-02-18</span>
      <span>15:41:20</span>
    </div>
  </div>
);

const App: React.FC = () => {
  return (
    <div className={`relative flex h-screen flex-col overflow-hidden bg-[#f0f0f0] text-xs text-black ${UI}`}>
      <TitleBar />
      <MenuBar />
      <MainToolbar />
      <main className="flex min-h-0 flex-1">
        <QueryPanel />
        <div className="flex w-2 shrink-0 justify-end pt-[269px]">
          <span className="h-[100px] w-1 border border-[#8a8a8a] bg-white" />
        </div>
        <div className="flex min-w-0 flex-1 flex-col pr-px">
          <BudgetTabs />
          <BudgetToolbar />
          <div className="mt-px">
            <BudgetGrid />
          </div>
          <div className="flex h-[30px] shrink-0 items-end pb-[2px] pl-[2px]">
            <button type="button" className={`h-[19px] border border-b-0 border-[#8a8a8a] bg-[#f7f7f7] px-[5px] leading-none ${SONG}`}>工料机显示</button>
          </div>
          <div className="flex min-h-0 flex-1">
            <MaterialGrid />
            <SidePanel />
          </div>
        </div>
      </main>
      <StatusBar />
      <Taskbar />
      <div className="absolute -top-2 left-[866px] h-2 w-[280px] rounded-sm shadow-[0_1px_3px_rgba(0,0,0,0.7)]" />
      <ConvertDialog />
    </div>
  );
};

export default App;
